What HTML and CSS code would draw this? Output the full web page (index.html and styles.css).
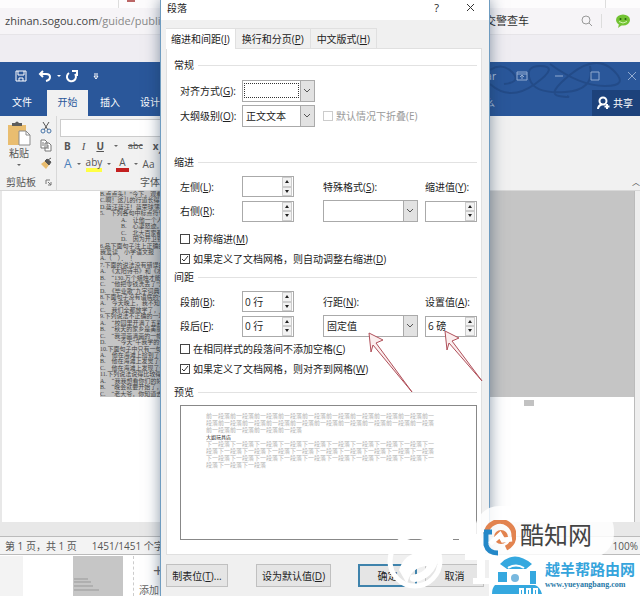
FILE: index.html
```
<!DOCTYPE html>
<html lang="zh-CN">
<head>
<meta charset="UTF-8">
<title>段落</title>
<link rel="stylesheet" href="styles.css">
</head>
<body>
<div class="desktop">
  <div class="browser-tabs"><span class="tab-left"></span><i class="red-mark"></i><span class="tab-right"></span></div>
  <div class="address">
    <span class="url">zhinan.sogou.com<em>/guide/publis</em></span>
    <span class="hot">交警查车</span>
    <svg class="search" width="12" height="12" viewBox="0 0 12 12"><circle cx="5" cy="5" r="4"/><path d="M8 8l3 3"/></svg>
    <svg class="wechat" width="16" height="14" viewBox="0 0 16 14"><ellipse cx="8" cy="6" rx="7" ry="5.5" fill="#73c334"/><path d="M4 10l-1 4 4-3z" fill="#73c334"/><circle cx="5.500" cy="5" r="1" fill="#27600c"/><circle cx="10.500" cy="5" r="1" fill="#27600c"/><path d="M4 7.500q4 3 8 0" fill="none" stroke="#d6f5b5"/></svg>
  </div>
  <div class="bookmarks"></div>

  <div class="word">
    <div class="title-bar">
      <svg class="quick" width="90" height="16" viewBox="0 0 90 16">
        <path d="M2 3h10v10h-10zM4 3v4h6v-4M5 13v-3h4v3"/>
        <path d="M29 3l-3 3 3 3M26 6h6q4 0 4 3t-4 4" class="thick"/>
        <path d="M43 7h4l-2 2z" class="solid"/>
        <path d="M55 5a4.500 4.500 0 1 0 6 1M58 3h5v5" class="thick"/>
        <path d="M80 6h4M80 8h4l-2 3z"/>
      </svg>
      <svg class="swirl" width="150" height="54" viewBox="0 0 150 54"><path d="M0 22q20 18 45 0t5-18q-15 0-10 14t35 12 25-26M60 2q30 22 55 22t8-16-42 4-12 22 8 0M0 8q12-8 22 2t-8 12"/></svg>
      <span class="doc-name">Microsoft Word Similar</span>
      <svg class="win-buttons" width="122" height="12" viewBox="0 0 122 12"><path d="M1 2h10v8h-10zM1 4h10M6 9v-4M4 7l2-2 2 2M39 6h8M75 2h8v8h-8zM112 2l8 8M120 2l-8 8"/></svg>
    </div>
    <div class="menu">
      <a href="#">文件</a><a href="#" class="current">开始</a><a href="#">插入</a><a href="#">设计</a>
      <span class="tell">告诉我您想要做什么</span>
      <button class="share"><svg width="13" height="14" viewBox="0 0 13 14"><circle cx="6" cy="5" r="3.500"/><path d="M1 13q0-3 4-5M10 8v5M7.500 10.500h5"/></svg>共享</button>
    </div>
    <div class="ribbon">
      <div class="group clip">
        <div class="clip-tools">
          <button class="paste">
            <svg width="24" height="25" viewBox="0 0 24 25"><path d="M1 4h18v20h-18z" fill="#e9bd70"/><path d="M5 5v-3h3q2-3 4 0h3v3z" fill="#5d5d5d"/><path d="M12 10h7l4 4v10h-11z" fill="#fff" stroke="#8b8b8b"/><path d="M19 10v4h4" fill="none" stroke="#8b8b8b"/></svg>
            粘贴<i class="caret"></i>
          </button>
          <div class="clip-side">
            <svg width="12" height="13" viewBox="0 0 12 13"><path d="M3 1l5 8M9 1l-5 8" fill="none" stroke="#555"/><circle cx="3" cy="10" r="2" fill="none" stroke="#4674a8"/><circle cx="9" cy="10" r="2" fill="none" stroke="#4674a8"/></svg>
            <svg width="12" height="13" viewBox="0 0 12 13"><path d="M1 1h4l2 2v6h-6zM5 4h4l2 2v6h-6zM7 7h2M7 9h2M2 4h2M2 6h2" fill="#fff" stroke="#777"/></svg>
            <svg width="12" height="12" viewBox="0 0 12 12"><path d="M1 7l4-3 4 4-3 4z" fill="#e9bd70"/><path d="M5 4l2-2 4 3-2 3zM8 3l3-2" fill="#555" stroke="#555"/></svg>
          </div>
        </div>
        <div class="group-name">剪贴板<svg width="7" height="7" viewBox="0 0 7 7"><path d="M1 5v-4h4M3 3l3 3M6 3v3h-3" fill="none" stroke="#777"/></svg></div>
      </div>
      <div class="group font">
        <input class="font-name" type="text" aria-label="字体名称">
        <div class="tools"><b>B</b><i class="it">I</i><b><u>U</u></b><i class="caret"></i><s>abc</s><b>x<sub>,</sub></b></div>
        <div class="tools"><span class="effect">A</span><i class="caret"></i><span class="mark">aby</span><i class="caret"></i><span class="color">A</span><i class="caret"></i><span>Aa</span></div>
        <div class="group-name">字体</div>
      </div>
      <span class="collapse">︿</span>
    </div>
    <div class="document">
      <div class="paper">
        <div class="selection">
          <p>B.点点头！”今下，观看着</p><p>C.啊！这儿的行道长得真</p><p>D.蓝汪蓝汪！蓝荣球薄车</p><p>5.　下列各句中标点符号</p>
          <p class="in">A.　让他一个人走</p><p class="in">B.　心凄怒迹。</p><p class="in">C.　北大百家都是</p><p class="in">D.　因为开卫到了</p>
          <p>6.品下面句子注上正确的标</p><p>我爱读　小学语文报　你看</p><p>A.（　）．　！</p><p>7.下面的说法没有错误的是</p>
          <p>A.　《太阳诗书》和《水浒</p><p>B.　“130.万个蜡烛才能照</p><p>C.　“他把零钱洗丢了”里</p><p>D.　《毕业歌“九字词典”</p>
          <p>8.下面句子没有语病的一项</p><p>A.　今天晚上，我不知道时</p><p>C.　我们全都放学了，只有</p><p>9.下列说法不正确的一项是</p>
          <p>A.　“校园里开满了五彩的</p><p>B.　“秋天的家乡是美丽的</p><p>C.　“我漫画满画的一幅画</p><p>D.　　“今天”午我学的一篇</p>
          <p>10.下面句子中只有一句是</p><p>A.　他在海滩上捡到了一个</p><p>B.　他在海滩上发觉了一个</p><p>C.　他在海滩上发现了一个</p>
          <p>11.下列说法说得比较得体</p><p>A.　“我我想看你们的好书</p><p>B.　“晚会就要开始了，请</p><p>C.　“老大爷，你知道去哪</p>
        </div>
        <i class="para-mark"></i>
      </div>
      <div class="scrollbar"></div>
    </div>
    <div class="status"><span>第 1 页，共 1 页</span><span>1451/1451 个字</span><span class="percent">100%</span></div>
  </div>
  <div class="under">
    <div class="under-side"></div>
    <svg class="thumb" width="50" height="40" viewBox="0 0 50 40"><path d="M0 0h50v40h-50z" fill="#c6c6c6"/><path d="M1 23h14M1 26h17M1 30h19M1 34h25" stroke="#999"/></svg>
    <div class="add"><span>+</span>添加</div>
  </div>
</div>

<div class="dialog">
  <div class="dialog-title"><span>段落</span><button class="help">?</button><button class="close" aria-label="关闭"><svg width="9" height="9" viewBox="0 0 9 9"><path d="M1 1l7 7M8 1l-7 7"/></svg></button></div>
  <div class="dialog-body">
    <div class="tabs"><button class="on">缩进和间距(<u>I</u>)</button><button>换行和分页(<u>P</u>)</button><button>中文版式(<u>H</u>)</button></div>
    <div class="panel">
      <h2>常规</h2>
      <div class="fields">
        <label for="align">对齐方式(<u>G</u>):</label>
        <div class="line"><span class="focus"><select id="align" class="short"><option></option></select></span></div>
        <label for="level">大纲级别(<u>O</u>):</label>
        <div class="line"><select id="level" class="short"><option>正文文本</option></select><label class="check off"><input type="checkbox" disabled>默认情况下折叠(E)</label></div>
      </div>
      <h2 class="indent">缩进</h2>
      <div class="fields four">
        <label for="left">左侧(<u>L</u>):</label>
        <span class="spin"><input id="left" type="text"><button aria-label="增加"></button><button aria-label="减少"></button></span>
        <label for="special">特殊格式(<u>S</u>):</label>
        <label for="by">缩进值(<u>Y</u>):</label>
        <label for="right">右侧(<u>R</u>):</label>
        <span class="spin"><input id="right" type="text"><button aria-label="增加"></button><button aria-label="减少"></button></span>
        <select id="special"><option></option></select>
        <span class="spin"><input id="by" type="text"><button aria-label="增加"></button><button aria-label="减少"></button></span>
      </div>
      <div class="checks">
        <label class="check"><input type="checkbox"><span>对称缩进(<u>M</u>)</span></label>
        <label class="check"><input type="checkbox" checked><span>如果定义了文档网格，则自动调整右缩进(<u>D</u>)</span></label>
      </div>
      <h2>间距</h2>
      <div class="fields four">
        <label for="before">段前(<u>B</u>):</label>
        <span class="spin"><input id="before" type="text" value="0 行"><button aria-label="增加"></button><button aria-label="减少"></button></span>
        <label for="spacing">行距(<u>N</u>):</label>
        <label for="at">设置值(<u>A</u>):</label>
        <label for="after">段后(<u>F</u>):</label>
        <span class="spin"><input id="after" type="text" value="0 行"><button aria-label="增加"></button><button aria-label="减少"></button></span>
        <select id="spacing"><option>固定值</option></select>
        <span class="spin"><input id="at" type="text" value="6 磅"><button aria-label="增加"></button><button aria-label="减少"></button></span>
      </div>
      <div class="checks tight">
        <label class="check"><input type="checkbox"><span>在相同样式的段落间不添加空格(<u>C</u>)</span></label>
        <label class="check"><input type="checkbox" checked><span>如果定义了文档网格，则对齐到网格(<u>W</u>)</span></label>
      </div>
      <h2 class="last">预览</h2>
      <div class="preview">
        <p>前一段落前一段落前一段落前一段落前一段落前一段落前一段落前一段落前一段落前一段落前一段落前一段落前一段落前一段落前一段落前一段落前一段落前一段落前一段落前一段落前一段落前一段落前一段落</p>
        <p class="sample">大姐玩具店</p>
        <p>下一段落下一段落下一段落下一段落下一段落下一段落下一段落下一段落下一段落下一段落下一段落下一段落下一段落下一段落下一段落下一段落下一段落下一段落下一段落下一段落下一段落下一段落下一段落下一段落下一段落下一段落下一段落下一段落下一段落下一段落下一段落</p>
      </div>
    </div>
    <div class="buttons"><button class="tabstop">制表位(<u>T</u>)...</button><button class="default">设为默认值(<u>D</u>)</button><button class="ok">确定</button><button>取消</button></div>
  </div>
  <svg class="arrows" width="330" height="400" viewBox="0 0 330 400"><path d="M208 333l14 7-7 3 36 49-39-47-2 7zM284 331l14 7-7 3 30 40-33-38-2 7z"/></svg>
</div>

<svg class="wm-white" width="250" height="96" viewBox="0 0 250 96">
  <circle cx="30" cy="61" r="25" fill="none" stroke="#fff" stroke-width="5"/>
  <path d="M14 70q6-18 22-17 12 0 20-7-2 32-26 36-8 0-4-7 12-1 16-9-16 1-20 18z" fill="#fff"/>
  <path d="M44 38h24v6h-24zM74 34h18v12h-18z" fill="#fff"/>
  <rect x="90" y="6" width="139" height="52" rx="24" fill="#fff" opacity=".85"/>
  <path d="M80 54h28v6h-28zM92 38h8v44h-8zM88 78h40v6h-40zM110 62h14v20h-14z" fill="#fff"/>
</svg>
<div class="wm-logo">
  <svg width="34" height="36" viewBox="0 0 34 36"><path d="M4 14a14 14 0 1 1 20 14" fill="none" stroke="#e2834f" stroke-width="5"/><path d="M2 12h8M4 12v13q2 8 12 8" fill="none" stroke="#2488c8" stroke-width="5"/><circle cx="19" cy="17" r="7" fill="#e2834f"/><path d="M8 24l10-9 3 5 9-1" fill="none" stroke="#fff" stroke-width="5"/></svg>
  <span>酷知网</span>
</div>
<div class="wm-site">
  <svg width="50" height="40" viewBox="0 0 50 40"><path d="M8 8q14-15 32 0l-6 5h-19zM6 16h9v10h-9zM38 15h6v13h-6zM3 29h40q5 2 7 9h-50q0-6 3-9z" fill="#35a8df"/><circle cx="23" cy="22" r="4" fill="#78b8df"/><path d="M16 12q8-5 16 0M28 38v-5h3v5M35 38v-5h3v5M42 38v-5h3v5" fill="none" stroke="#fff" stroke-width="2"/></svg>
  <div><b>越羊帮路由网</b><a href="#">www.yueyangbang.com</a></div>
</div>
</body>
</html>
```
FILE: styles.css
```
*{margin:0;padding:0;box-sizing:border-box;}
html,body{height:100%;overflow:hidden;}
body{position:relative;font:10px/16px "Open Sans","Noto Sans CJK SC",sans-serif;color:#333;background:#fff;}
button,input,select{font:inherit;color:inherit;border-radius:0;}
button{border:0;background:none;white-space:nowrap;}
a{text-decoration:none;}
p{white-space:nowrap;}
.desktop{display:flex;flex-direction:column;height:100%;}

/* browser */
.browser-tabs{display:flex;height:8px;background:#fdfcfd;}
.tab-left{width:119px;border-right:1px solid #ddd;}
.red-mark{width:8px;height:2px;margin-left:8px;background:#b66;}
.tab-right{width:35px;margin-left:auto;border-left:1px solid #ddd;}
.address{display:flex;align-items:center;height:27px;padding:0 9px 0 5px;background:#f6f4f7;border-bottom:1px solid #e6e4e8;font-size:11px;}
.url{color:#444;}
.url em{font-style:normal;color:#888;}
.hot{margin-left:auto;}
.search{margin:0 8px 0 52px;fill:none;stroke:#999;}
.wechat{box-sizing:content-box;padding-left:13px;border-left:1px solid #ddd;}
.bookmarks{height:27px;background:#efedf2;}

/* word */
.word{display:flex;flex:1;flex-direction:column;min-height:0;}
.title-bar{position:relative;display:flex;align-items:center;height:28px;padding:0 2px 0 14px;background:#2a579a;color:#b9c9e2;}
.quick{fill:none;stroke:#fff;}
.quick .thick{stroke-width:2;}
.quick .solid{fill:#fff;stroke:none;}
.swirl{position:absolute;right:0;top:0;fill:none;stroke:#234b88;stroke-width:2;}
.doc-name{position:relative;margin-left:auto;margin-right:20px;}
.win-buttons{position:relative;fill:none;stroke:#91abd0;}
.menu{display:flex;align-items:center;height:26px;padding-left:2px;background:#2a579a;color:#fff;}
.menu a{width:40px;height:26px;line-height:24px;text-align:center;color:#fff;}
.menu a.current{width:41px;margin:0 2px 0 5px;background:#f1f1f1;color:#2a579a;}
.tell{margin-left:auto;margin-right:97px;color:#a9bddb;}
.share{position:relative;display:flex;align-items:center;gap:3px;height:26px;padding:0 7px 0 5px;background:#1d427b;color:#fff;}
.share svg{fill:none;stroke:#fff;stroke-width:2;}
.ribbon{display:flex;height:75px;background:#f1f1f1;border-bottom:1px solid #d8d8d8;color:#555;}
.group{display:flex;flex-direction:column;}
.group-name{display:flex;align-items:center;gap:12px;height:16px;margin-top:auto;}
.clip{width:57px;padding:5px 3px 0 6px;border-right:1px solid #d8d8d8;}
.clip-tools{display:flex;justify-content:space-between;}
.paste{display:flex;flex-direction:column;align-items:center;width:26px;line-height:14px;}
.caret{align-self:center;border:2px solid transparent;border-top-color:#666;border-bottom:0;}
.paste .caret{margin-top:4px;}
.clip-side{display:flex;flex-direction:column;gap:5px;padding-right:1px;}
.clip .group-name{gap:9px;}
.font{width:140px;padding:3px 0 0 3px;}
.font-name{width:100%;height:18px;border:1px solid #ccc;background:#fff;}
.tools{display:flex;align-items:center;gap:10px;height:18px;padding-left:4px;}
.tools .it{font-family:"Liberation Serif",serif;font-size:11px;padding:0 1px;}
.tools sub{font-size:8px;line-height:8px;}
.tools s{font-size:9px;}
.effect{color:#4a80bb;font-size:12px;}
.mark{height:16px;border-bottom:4px solid #ff4;line-height:12px;}
.color{height:16px;padding:0 3px;border-bottom:4px solid #c32020;line-height:12px;}
.tools + .tools{gap:5px;}
.font .group-name{padding-left:80px;}
.collapse{align-self:flex-end;margin-left:auto;font-size:8px;}
.document{display:flex;flex:1;min-height:0;padding:0 0 14px 2px;background:#e8e8e8;}
.paper{flex:1;background:#fff;}
.selection{display:flex;flex-direction:column;justify-content:space-between;height:206px;margin-left:98px;overflow:hidden;background:#c5c5c5;color:#444;font:6px/6px "Liberation Serif","Noto Sans CJK SC",serif;}
.selection .in{padding-left:21px;}
.para-mark{display:block;width:10px;height:6px;margin:3px 100px 0 auto;background:#c2c2c2;}
.scrollbar{width:6px;background:#eee;border-left:1px solid #bbb;}
.status{display:flex;align-items:center;gap:15px;height:19px;padding:0 2px 0 5px;border:1px solid #bbb;border-width:1px 0;background:#f3f3f3;color:#555;}
.percent{margin-left:auto;}
.under{display:flex;height:41px;padding-top:1px;background:#fff;}
.under-side{width:23px;background:#f3f3f3;}
.thumb{margin-left:50px;}
.add{display:flex;flex-direction:column;margin-left:10px;padding-left:5px;border-left:1px dashed #ccc;line-height:20px;color:#666;}
.add span{margin:4px 0 0 14px;font-size:18px;}

/* paragraph dialog */
.dialog{position:absolute;top:0;bottom:0;left:160px;display:flex;flex-direction:column;width:330px;border:1px solid #6f9cc0;border-width:0 1px;background:#fff;box-shadow:0 0 14px rgba(20,50,80,.5);color:#222;}
.dialog-title{display:flex;align-items:center;height:20px;padding:0 14px 4px 6px;}
.help{margin-left:auto;font-size:11px;}
.close{margin-left:27px;}
.close svg{fill:none;stroke:#333;}
.dialog-body{display:flex;flex:1;flex-direction:column;min-height:0;padding:8px 5px 0;background:#f0f0f0;}
.tabs{display:flex;height:20px;}
.tabs button{padding:0 6px;border:1px solid #e0e0e0;border-width:1px 1px 0 0;}
.tabs .on{height:21px;padding:0 5px;background:#fff;z-index:1;}
.panel{display:flex;flex:1;flex-direction:column;min-height:0;margin-right:2px;padding:8px 4px 14px 7px;border:1px solid #e0e0e0;background:#fff;}
h2{display:flex;align-items:center;gap:4px;height:16px;font-size:10px;font-weight:normal;}
h2::after{content:"";flex:1;height:1px;background:#e2e2e2;}
.indent{margin-top:27px;}
.last{margin-top:5px;}
.fields{display:grid;grid-template-columns:62px 1fr;gap:3px 0;align-items:center;margin:7px 0 0 6px;}
.four{grid-template-columns:62px 81px 102px 52px;margin-top:6px;}
.line{display:flex;align-items:center;gap:8px;}
select{width:95px;height:22px;padding-left:3px;border:1px solid #aaa;appearance:none;background:#fff url("data:image/svg+xml,%3Csvg xmlns='http://www.w3.org/2000/svg' width='14' height='22'%3E%3Cpath d='M0 0h14v22H0z' fill='%23e2e2e2'/%3E%3Cpath d='M.5 0v22' stroke='%23aaa'/%3E%3Cpath d='M4 9l3 3 3-3' fill='none' stroke='%23555'/%3E%3C/svg%3E") right center no-repeat;}
.short{width:73px;}
.focus{position:relative;display:flex;}
.focus::after{content:"";position:absolute;inset:3px 16px 4px 2px;border:1px dotted #333;pointer-events:none;}
.spin{display:grid;grid-template-columns:1fr 12px;grid-template-rows:1fr 1fr;width:52px;height:21px;border:1px solid #aaa;background:#fff;}
.spin input{grid-row:1 / 3;width:100%;min-width:0;padding-left:2px;border:0;background:none;}
.spin button{display:flex;align-items:center;justify-content:center;margin:0 1px;border:1px solid #ccc;background:#f2f2f2;}
.spin button::after{content:"";border:2px solid transparent;border-top:0;border-bottom:3px solid #222;}
.spin button + button::after{border-top:3px solid #222;border-bottom:0;}
.checks{margin:7px 0 0 6px;}
.tight{margin-top:2px;}
.check{display:flex;align-items:center;gap:3px;height:20px;}
.check input{width:10px;height:10px;border:1px solid #444;appearance:none;background:#fff;}
.check input:checked{background:url("data:image/svg+xml,%3Csvg xmlns='http://www.w3.org/2000/svg' width='8' height='8'%3E%3Cpath d='M1 4l2 2 4-5' fill='none' stroke='%23333'/%3E%3C/svg%3E") center no-repeat;}
.off{color:#999;}
.off input{border-color:#ccc;}
.preview{flex:1;min-height:0;margin:5px 0 0 6px;padding:6px 39px 0 25px;border:1px solid #888;color:#b4b4b4;font:6px/7px "Noto Sans CJK SC",sans-serif;}
.preview p{white-space:normal;word-break:break-all;}
.preview .sample{color:#222;font-size:5px;}
.buttons{display:flex;align-items:center;justify-content:space-between;height:41px;}
.buttons button{width:59px;height:23px;border:1px solid #c0c0c0;background:#e5e5e5;}
.buttons .tabstop{width:62px;}
.buttons .default{width:75px;margin:0 19px 0 20px;}
.buttons .ok{border:2px solid #3f83ac;}
.arrows{position:absolute;left:0;top:0;fill:#fbeeee;stroke:#b0505a;stroke-width:1;pointer-events:none;}

/* watermarks */
.wm-white{position:absolute;right:5px;bottom:0;width:250px;pointer-events:none;}
.wm-logo{position:absolute;right:48px;bottom:40px;display:flex;align-items:center;gap:4px;color:#444;font-size:24px;line-height:24px;pointer-events:none;}
.wm-logo span{padding-bottom:6px;}
.wm-site{position:absolute;right:0;bottom:0;display:flex;align-items:center;gap:3px;padding:0 5px 0 3px;background:#fff;line-height:18px;}
.wm-site div{display:flex;flex-direction:column;}
.wm-site b{color:#35a4dc;font-size:15px;}
.wm-site a{color:#2779a7;font:bold 8px/14px "Liberation Serif",serif;}
```
